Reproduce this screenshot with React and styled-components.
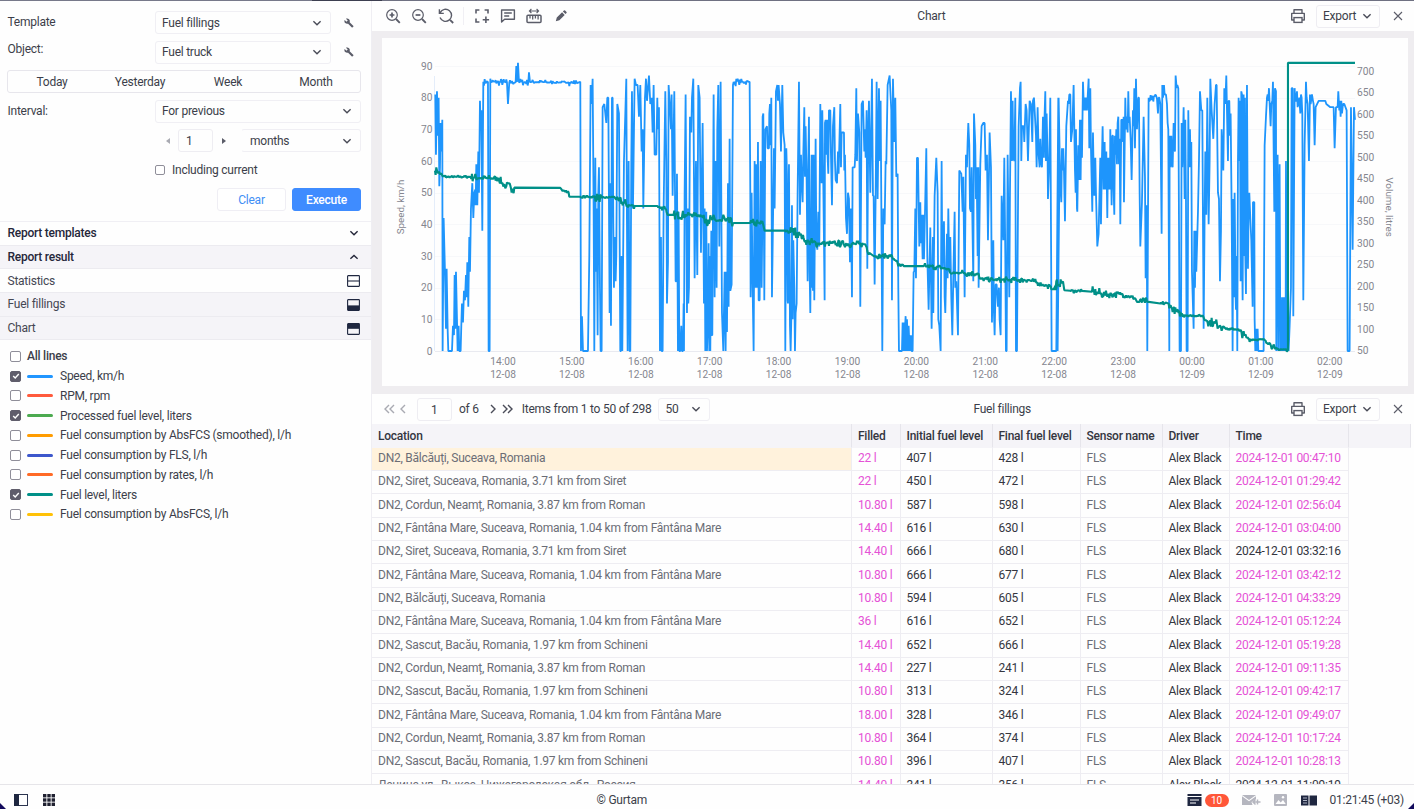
import React from "react";
import styled, { createGlobalStyle } from "styled-components";

const GlobalStyle = createGlobalStyle`
    * { box-sizing: border-box; }
    body {
        margin: 0;
        overflow: hidden;
        background: #fefefe;
        color: #3c3e4a;
        font-family: Roboto, "Noto Sans", sans-serif;
        font-size: 12px;
        letter-spacing: -0.245px;
        line-height: 14px;
    }
    svg { display: block; flex: none; }
`;

/* ---------- data ---------- */

const lines = [
    { name: "Speed, km/h", color: "#2196ff", checked: true },
    { name: "RPM, rpm", color: "#ff5a3c", checked: false },
    { name: "Processed fuel level, liters", color: "#4caa50", checked: true },
    { name: "Fuel consumption by AbsFCS (smoothed), l/h", color: "#ff9c00", checked: false },
    { name: "Fuel consumption by FLS, l/h", color: "#3c57cc", checked: false },
    { name: "Fuel consumption by rates, l/h", color: "#ff6a26", checked: false },
    { name: "Fuel level, liters", color: "#009088", checked: true },
    { name: "Fuel consumption by AbsFCS, l/h", color: "#ffc107", checked: false },
];

const SIRET = "DN2, Siret, Suceava, Romania, 3.71 km from Siret";
const CORDUN = "DN2, Cordun, Neamț, Romania, 3.87 km from Roman";
const FANTANA = "DN2, Fântâna Mare, Suceava, Romania, 1.04 km from Fântâna Mare";
const SASCUT = "DN2, Sascut, Bacău, Romania, 1.97 km from Schineni";
const BALCAUTI = "DN2, Bălcăuți, Suceava, Romania";

const rows = [
    [BALCAUTI, "22 l", "407 l", "428 l", "00:47:10"],
    [SIRET, "22 l", "450 l", "472 l", "01:29:42"],
    [CORDUN, "10.80 l", "587 l", "598 l", "02:56:04"],
    [FANTANA, "14.40 l", "616 l", "630 l", "03:04:00"],
    [SIRET, "14.40 l", "666 l", "680 l", "03:32:16", true],
    [FANTANA, "10.80 l", "666 l", "677 l", "03:42:12"],
    [BALCAUTI, "10.80 l", "594 l", "605 l", "04:33:29"],
    [FANTANA, "36 l", "616 l", "652 l", "05:12:24"],
    [SASCUT, "14.40 l", "652 l", "666 l", "05:19:28"],
    [CORDUN, "14.40 l", "227 l", "241 l", "09:11:35"],
    [SASCUT, "10.80 l", "313 l", "324 l", "09:42:17"],
    [FANTANA, "18.00 l", "328 l", "346 l", "09:49:07"],
    [CORDUN, "10.80 l", "364 l", "374 l", "10:17:24"],
    [SASCUT, "10.80 l", "396 l", "407 l", "10:28:13"],
    ["Ленина ул., Выкса, Нижегородская обл., Россия", "14.40 l", "341 l", "356 l", "11:09:19", true],
];

// "tick,value[,noise]" - three ticks per pixel, noise is spread over the way to the point
const speedTrack = [
    [0, `45,81 47,62 50,82 53,68 55,80 57,52 59,58 61,72 63,63 66,73 67,0 70,42 74,25 77,7 79,26 82,7 84,0 95,0 98,8 101,5
    103,24 105,7 107,25 110,10 112,0 115,8 117,0 121,0 123,8 125,15 128,9 131,19 134,16 137,24 139,17 141,28 144,14 147,36
    149,25 152,45 156,53 159,42 162,50 165,51 166,46 168,59 171,46 174,63 176,50 179,79 181,70 183,76 186,38 189,85
    203,85,0.7 205,0 208,0 210,86 212,85 260,84.8,0.8 263,78 267,84.8 286,84.8,0.6 288,90 290,85 293,91 296,85
    324,84.8,0.7 326,88 329,85 400,84.8,0.5 445,84.9,0.2 470,84.6,0.7 480,85 482,0 485,11 488,0 503,0 507,30 511,84 514,78
    517,86 520,45 522,0 525,61 527,25 529,45 532,5 534,50 536,58 539,20 541,0 544,0 547,77 552,78 558,72 561,80 564,80
    568,12 570,53 572,8 575,80 577,80 579,40 581,20 583,36 586,22 588,30 591,78 596,75 600,0 602,0 604,30 606,0 611,60
    618,86 620,40 622,0 625,60 628,0 630,0 633,60 635,82 638,45 643,86 647,84 652,84 656,74 660,84 664,63 667,70 669,45
    674,80 677,86 680,79 683,83 686,87 690,78 694,80 697,69 700,84 703,62 708,62 711,80 713,70 716,77 719,0 722,36 724,0
    727,0 730,45 735,82 738,60 740,15 743,28 745,84 749,77 752,70 754,81 757,49 762,82 766,22 768,22 770,56 772,20 773,0
    775,44 777,0 780,0 783,8 785,0 788,0 790,15 791,0 793,50 796,81 800,12 803,45 804,15 806,20 809,74 813,69 815,80
    819,86 823,23 827,60 831,24 834,84 838,80 842,31 847,72 851,15 853,45 855,0 858,44 860,0 863,10 865,34 867,0 869,30
    870,0 873,38 874,5 876,5 880,81 883,17 886,60 889,20 891,70 894,84 897,33 901,85 905,12 909,0 913,25 916,0 918,25
    920,6 923,53 925,14 928,67 930,19 934,21 938,84 940,85`],
    [930, `25,85,0.8 58,85,0.6 60,50 61,17 64,50 67,20 70,0 73,60 75,20 77,59 80,20 83,66 85,16 88,16 91,60 94,20 96,40 97,74
    99,75 102,16 105,70 110,71 112,64 116,64 117,75 119,78 121,65 123,80 125,17 131,64 133,45 137,82 141,84 143,79 145,84
    149,78 152,63 156,84 159,69 163,65 165,0 168,64 170,56 172,16 173,15 176,59 179,8 181,0 183,10 185,46 187,10 189,35
    192,20 194,0 196,12 199,15 202,50 206,85 209,43 212,62 214,54 217,47 219,62 222,77 224,55 226,71 229,54 232,22 234,60
    236,74 238,25 240,12 244,62 245,20 247,62 248,19 250,62 252,16 256,67 258,35 261,32 264,44 267,33 270,78 274,53 276,76
    279,53 283,16 284,72 286,73 288,62 291,73 292,61 294,56 296,76 300,76 302,62 305,46 308,71 312,77 314,60 316,54 320,53
    323,63 325,56 330,78 332,58 334,69 341,69 342,57 344,62 347,42 350,37 353,50 356,48 359,28 362,45 365,17 367,58 373,58
    375,62 378,83 380,60 383,75 387,69 390,14 394,78 398,79 402,63 404,70 406,61 409,76 411,26 414,70 416,79 420,50 425,86
    428,49 430,49 433,21 436,49 439,85 442,48 446,83 449,60 451,79 456,0 459,45 463,40 466,60 468,59 472,84 478,87 483,76
    485,16 488,86 492,66 495,80 498,55 502,56 504,20 506,0 515,0 517,9 519,0 521,9 523,0 524,7 526,11 528,0 530,10 533,0
    535,8 538,0 539,5 541,0 542,5 544,0 547,0 550,25 552,25 555,45 557,23 560,61 563,61 567,33 570,47 572,34 574,43 577,29
    579,43 581,29 584,43 588,64 591,30 595,13 600,39 604,7 608,36 609,12 613,49 618,61 622,50 624,10 627,8 631,0 634,60
    636,26 641,41 643,17 645,12 650,37 652,23 654,45 657,25 660,36 663,17 666,5 669,23 673,44 675,20 678,22 683,5 687,57
    693,56 697,44 699,55 703,17 707,62 710,58 712,66 714,72 717,65 719,45 722,44 724,58 726,43 729,22 731,75 735,65 737,48
    739,58 742,30 744,58 745,20 750,59 754,71 759,72 763,72 766,57 770,62 773,35 778,69 782,58 785,9 789,35 791,12 793,5
    796,21 799,21 803,14 806,20 808,10 811,5 814,49 819,35 822,61 825,30 827,0 829,0 832,62 837,17 839,50 842,82 845,60
    847,79 849,61 852,60 855,80 857,0 860,0 862,30 865,71 869,83 871,85 873,60 875,71 880,71 882,66 886,78 889,76 893,60
    898,79 902,78 906,66 908,79 911,80 917,68 919,58 922,77 925,62 928,58 930,67 932,60 935,58 938,74 941,61 943,75 945,82
    947,60 949,75 952,60 953,48 957,60 960,80 964,0 978,0 981,40 984,80 988,62`],
    [1890, `22,0 25,80 28,63 30,54 33,47 35,64 37,57 39,64 41,57 44,41 48,71 53,79 55,78 57,81 60,81 62,66 66,70 70,84 74,57
    76,50 77,70 80,45 81,44 84,65 86,54 89,73 91,54 93,73 95,61 98,85 101,76 103,80 105,76 108,80 110,76 115,86 117,64
    120,83 122,64 126,44 128,69 130,57 132,49 135,61 137,50 141,33 145,37 150,61 152,40 155,61 157,71 160,51 163,66 165,51
    168,63 171,42 173,61 175,51 177,61 179,51 180,70 184,46 186,68 188,68 190,51 192,43 194,68 196,62 198,70 200,59 202,72
    204,74 206,59 208,67 210,40 213,73 216,73 218,66 220,74 221,47 225,80 227,70 229,74 232,69 234,82 236,72 238,74 241,67
    244,54 248,76 250,71 252,83 254,64 257,86 260,70 264,80 266,80 268,50 270,33 275,47 280,74 284,55 286,23 289,46 291,0
    295,80 320,79.7,0.7 323,75 325,80 327,80 330,78 334,37 336,84 338,80 341,84 343,81 347,81 350,78 352,72 354,70 357,0
    358,65 359,68 361,58 363,68 365,61 367,58 370,72 372,64 374,63 376,87 379,83 381,84 384,83 388,0 392,0 394,72 396,58
    400,77 403,48 405,73 407,48 409,0 412,0 414,76 416,58 419,70 421,58 423,66 425,25 430,7 432,38 434,20 436,38 438,25
    443,44 446,60 449,82 453,76 456,76 460,7 463,43 465,63 468,43 471,80 475,40 478,60 480,86 484,76 489,67 493,78 497,84
    499,84 503,50 506,48 509,22 512,38 514,70 519,57 522,83 525,78 528,87 533,60 535,79 537,79 539,68 541,75 544,45 547,0
    549,48 551,17 553,50 556,17 557,13 559,30 561,0 563,60 565,80 567,60 569,79 571,22 573,82 575,81 576,25 577,16 580,81
    582,30 584,80 585,30 587,18 590,84 593,26 595,45 597,50 600,42 603,35 607,14 608,47 612,47 613,10 615,0 617,7 619,0
    622,7 624,0 640,0 643,65 647,74 650,80 652,81 654,79 656,83 661,71 663,78 666,79 668,85 672,44 674,83 677,82 678,0
    680,55 682,62 684,0 686,40 688,59 690,0 692,16 694,0 695,17 696,0 698,17 699,0 701,17 702,0 704,17 706,0 707,60 710,0
    712,17 715,0 718,8 722,20 724,83 727,83 729,11 733,83 735,79 737,79 740,82 742,77 747,80 750,75 752,81 754,80 756,75
    759,16 763,65 767,85 769,80 772,78 776,60 779,81 781,78 785,81 788,79 790,78 793,65 796,77 805,79 825,79 828,78 840,77
    850,77 853,64 857,77 862,77 864,82 867,76 869,79 871,74 873,79 875,75 878,78 882,78 889,76 892,0 898,0 902,77 907,32
    911,77 914,73`],
];

const fuelTrack = [
    [0, `44,57 50,57,0.8 67,55.2,0.8 80,55,0.6 110,55,0.2 145,55,0.3 180,54.6,0.9 235,54.5,0.7 245,53,0.8 258,52,0.9
    282,51.6,1 420,51.5 425,50.8,0.5 445,50,0.4 447,48.7 480,48.7 520,48.7,0.3 545,48.3,0.9 580,48.7,0.2 595,47.5,0.4
    625,46,1 645,45.8,0.6 710,45.8 735,44.8,0.6 742,43,0.5 760,43 800,43,0.9 840,43,0.5 852,41.7,0.6 905,41,1.1 909,43
    916,41 940,40.4,0.9`],
    [930, `60,40.4 98,40.2,0.9 103,38 165,38 205,37.5,1.1 210,36.5,0.7 230,34.5,0.7 270,34,0.9 405,33.7,0.7 417,31,0.8 430,30
    485,30,0.5 488,29 500,28.5,0.4 504,26.8 520,26.8,0.6 580,26.8 620,26.5,0.6 655,25.8,0.6 662,24.5,0.9 690,24.8,0.3
    745,24.4,0.8 748,22.7 795,22.5,0.5 895,22.4,0.6 925,21.4,0.6 962,20.2,0.5 963,19.5 978,19.5 980,21.5`],
    [1890, `10,19.5 16,19.5 18,22 25,21,0.6 38,22,0.7 42,19.2 60,19 95,19,0.4 125,18.7 165,17.8,1 215,18,0.7 255,16.6,0.6
    260,15.5 290,15.6,0.8 330,15 355,15,0.6 365,13.5,0.7 385,12,0.7 410,11.2,0.7 458,11.1,0.2 462,10 500,8.5,1 520,7.7,1
    528,6.9 560,6.9,0.3 590,4.2,0.8 600,3.6,0.5 642,3.6,0.2 660,2.2,0.4 675,0.6,0.6 713,0.4,0.3 713,91 914,91`],
];

const TICKS_PER_PX = 3;
const PX_PER_KMH = 285 / 90;

function toPoints(track) {
    const out = [];
    let prev = null;
    let seed = 7;
    const push = (t, v) => out.push(`${(t / TICKS_PER_PX).toFixed(2)},${(285 - v * PX_PER_KMH).toFixed(2)}`);
    track.forEach(([start, text]) => {
        text.trim().split(/\s+/).forEach((item) => {
            const [tick, v, noise] = item.split(",").map(Number);
            const t = tick + start;
            if (noise && prev) {
                for (let x = prev.t + 2; x < t - 1; x += 2) {
                    seed = (seed * 16807) % 2147483647;
                    const r = seed / 2147483647 - 0.5;
                    const base = prev.v + ((v - prev.v) * (x - prev.t)) / (t - prev.t);
                    push(x, base + r * Math.abs(r) * 7 * noise);
                }
            }
            push(t, v);
            prev = { t, v };
        });
    });
    return out.join(" ");
}

/* ---------- icons ---------- */

const Stroke = ({ size = 18, w = 1.3, color = "#5b5d69", children }) => (
    <svg width={size} height={size} viewBox={`0 0 ${size} ${size}`} fill="none" stroke={color} strokeWidth={w}>
        {children}
    </svg>
);

const ZoomIcon = ({ plus }) => (
    <Stroke w={1.2}>
        <circle cx="8" cy="8" r="5.3" />
        <path d={plus ? "M5.6 8h4.8M8 5.6v4.8" : "M5.6 8h4.8"} strokeWidth="1.7" />
        <path d="M12 12l3.8 3.8" strokeWidth="1.8" />
    </Stroke>
);

const ResetIcon = () => (
    <Stroke>
        <path d="M3.2 5.6A6 6 0 1 1 3 10.6M2.4 2.2v4.2h4.4" strokeWidth="1.4" />
        <path d="M13 12.8l3.2 3.2" strokeWidth="1.8" />
    </Stroke>
);

const SelectIcon = () => (
    <Stroke w={1.6}>
        <path d="M3 6.4V3h3.4M11.6 3H15v3.4M3 11.6V15h3.4M12.9 9.6v6.4M9.7 12.8h6.4" />
    </Stroke>
);

const CommentIcon = () => (
    <Stroke w={1.4}>
        <path d="M2.6 3h12.8v9.2H5.6L2.6 15z" strokeLinejoin="round" />
        <path d="M5.2 6h7.6M5.2 9h5" />
    </Stroke>
);

const RulerIcon = () => (
    <Stroke w={1.3}>
        <rect x="2" y="8.2" width="14" height="7.4" rx="1" strokeWidth="1.5" />
        <path d="M5 8.5v3M7.7 8.5v4M10.4 8.5v3M13.1 8.5v4" />
        <path d="M4.4 4h9.2M6.4 2L4.4 4l2 2M11.6 2l2 2-2 2" strokeWidth="1.1" />
    </Stroke>
);

const PencilIcon = () => (
    <svg width="18" height="18" viewBox="0 0 18 18" fill="#5b5d69">
        <path d="M3.8 14.2l1-3.6 5.3-5.3 2.6 2.6-5.3 5.3zM10.9 4.5l1-1q.6-.5 1.2 0l1.4 1.4q.5.6 0 1.2l-1 1z" />
    </svg>
);

const PrintIcon = () => (
    <Stroke w={1.4}>
        <path d="M5 6.2V2.7h8v3.5M5 13H2.7V6.4h12.6V13H13" strokeLinejoin="round" />
        <rect x="5" y="10.6" width="8" height="4.8" />
    </Stroke>
);

const CloseIcon = () => (
    <Stroke size={10} w={1.1}>
        <path d="M1 1l8 8M9 1L1 9" />
    </Stroke>
);

const Chevron = ({ up, color = "#4a4c58", w = 1.4 }) => (
    <Stroke size={10} w={w} color={color}>
        <path d={up ? "M1.4 6.8L5 3.4l3.6 3.4" : "M1.4 3.2L5 6.8l3.6-3.6"} />
    </Stroke>
);

const PagerIcon = ({ d, width, color = "#4a4c58" }) => (
    <svg width={width} height="10" viewBox={`0 0 ${width} 10`} fill="none" stroke={color} strokeWidth="1.4">
        <path d={d} />
    </svg>
);

const WrenchIcon = () => (
    <svg width="10" height="10" viewBox="0 0 24 24" fill="#5b5d69">
        <path d="M22.7 19l-9.1-9.1c.9-2.3.4-5-1.5-6.9-2-2-5-2.4-7.4-1.3L9 6 6 9 1.6 4.7C.4 7.1.9 10.1 2.9 12.1c1.9 1.9 4.6 2.4 6.9 1.5l9.1 9.1c.4.4 1 .4 1.4 0l2.3-2.3c.5-.4.5-1.1.1-1.4z" />
    </svg>
);

const LayoutIcon = ({ kind }) => (
    <svg width="13" height="12" viewBox="0 0 13 12" fill="none" stroke="#1f2740" strokeWidth="1.1">
        <rect x="0.6" y="0.6" width="11.8" height="10.8" rx="0.6" />
        {kind === "split" && <path d="M1 6h11" />}
        {kind === "bottom" && <rect x="1" y="6.4" width="11" height="4.8" fill="#1f2740" stroke="none" />}
        {kind === "top" && <rect x="1" y="1" width="11" height="4.8" fill="#1f2740" stroke="none" />}
    </svg>
);

/* ---------- left panel ---------- */

const Page = styled.div`
    position: relative;
    display: grid;
    grid-template: 1px 783px 25px / 372px 1fr;
    width: 1414px;
    height: 809px;
    overflow: hidden;
`;

const TopStrip = styled.div`
    grid-column: 1 / 3;
    background: linear-gradient(90deg, #77798a 0 312px, #3d3f50 312px 382px, #6f7182 382px);
`;

const SidePanel = styled.aside`
    border-right: 1px solid #efeef3;
`;

const Form = styled.div`
    height: 221px;
    padding: 10px 10px 0 7px;
    border-bottom: 1px solid #f0eff4;
`;

const FormRow = styled.div`
    display: grid;
    grid-template-columns: 148px 1fr;
    height: ${(p) => p.$h || 29.5}px;
`;

const Label = styled.span`
    padding: ${(p) => p.$top || 4.4}px 0 0 0.5px;
`;

const Controls = styled.div`
    display: flex;
    align-items: center;
    height: 23px;
`;

const Select = styled.div`
    display: flex;
    align-items: center;
    justify-content: space-between;
    width: ${(p) => p.$w}px;
    height: 23px;
    padding: 0 8.5px 0 ${(p) => p.$left || 6}px;
    border: 1px solid #f0eff4;
    border-left-color: ${(p) => (p.$open ? "transparent" : "#f0eff4")};
    border-radius: 3px;
    margin-right: ${(p) => p.$gap || 0}px;
`;

const Segments = styled.div`
    display: grid;
    grid-template-columns: repeat(4, 1fr);
    width: 354px;
    height: 23px;
    border: 1px solid #e7e6ec;
    border-radius: 3px;
    text-align: center;
    line-height: 22px;
    margin-bottom: 6.5px;
`;

const Arrow = styled.i`
    border: 3px solid transparent;
    border-width: 3.5px 4px;
    border-left-color: ${(p) => (p.$back ? "transparent" : "#5b5d69")};
    border-right-color: ${(p) => (p.$back ? "#a9aab2" : "transparent")};
    margin-left: ${(p) => (p.$back ? 7 : 9)}px;
    margin-right: ${(p) => (p.$back ? 8 : 11)}px;
`;

const NumberInput = styled.div`
    width: 35px;
    height: 23px;
    padding-left: ${(p) => p.$left || 7}px;
    line-height: 22px;
    border: 1px solid #eeedf2;
    border-radius: 3px;
`;

const Check = styled.span`
    display: flex;
    align-items: center;
    justify-content: center;
    width: ${(p) => p.$size || 10}px;
    height: ${(p) => p.$size || 10}px;
    border: 1px solid ${(p) => (p.$on ? "#5f5d6b" : "#8f8e99")};
    border-radius: 2px;
    background: ${(p) => (p.$on ? "#5f5d6b" : "#fff")};
    flex: none;
`;

const CheckLabel = styled.span`
    margin-left: ${(p) => p.$gap || 7}px;
`;

const Buttons = styled.div`
    display: flex;
    justify-content: flex-end;
    gap: 6px;
`;

const Button = styled.div`
    width: 69px;
    height: 23px;
    line-height: 22px;
    text-align: center;
    border: 1px solid ${(p) => (p.$primary ? "#3f8cff" : "#efeef4")};
    border-radius: 3px;
    background: ${(p) => (p.$primary ? "#3f8cff" : "#fff")};
    color: ${(p) => (p.$primary ? "#fff" : "#3f8ff5")};
    font-weight: ${(p) => (p.$primary ? 500 : 400)};
`;

const PanelRow = styled.div`
    display: flex;
    align-items: center;
    justify-content: space-between;
    height: 23.7px;
    padding: 0 ${(p) => (p.$bold ? 12.5 : 11)}px 0 7.5px;
    background: ${(p) => (p.$active ? "#f5f4f8" : "#fefefe")};
    border-bottom: 1px solid #ecebf0;
    font-weight: ${(p) => (p.$bold ? 500 : 400)};
    color: ${(p) => (p.$bold ? "#25273a" : "#454753")};

    > svg { margin-top: ${(p) => (p.$bold ? 0 : 1)}px; }
`;

const LineList = styled.div`
    padding: 6px 0 0 10px;
`;

const LineRow = styled.div`
    display: flex;
    align-items: center;
    height: 19.75px;
    font-weight: ${(p) => (p.$bold ? 500 : 400)};
`;

const LineColor = styled.span`
    width: 26px;
    height: 3px;
    border-radius: 2px;
    margin: 0 0 0 6px;
    background: ${(p) => p.$color};
`;

/* ---------- right side ---------- */

const Main = styled.main`
    display: flex;
    flex-direction: column;
    min-width: 0;
    overflow: hidden;
`;

const Toolbar = styled.div`
    display: flex;
    align-items: center;
    height: 30px;
    padding: 0 11px 0 ${(p) => p.$left || 12}px;
    flex: none;
`;

const Tools = styled.div`
    display: flex;
    align-items: center;
    gap: 8.4px;
`;

const ToolDivider = styled.span`
    width: 1px;
    height: 18px;
    background: #f0eff4;
`;

const Title = styled.div`
    flex: 1;
    text-align: center;
    padding-left: ${(p) => p.$shift || 0}px;
`;

const ExportButton = styled.div`
    display: flex;
    align-items: center;
    justify-content: space-between;
    width: 64px;
    height: 23px;
    padding: 0 7px 0 6px;
    margin: 0 13px 0 9px;
    border: 1px solid #eeedf2;
    border-radius: 3px;
`;

const ChartArea = styled.div`
    height: 363px;
    padding: 7px 6px 8px 10px;
    background: #efedf0;
    flex: none;
`;

const ChartCard = styled.div`
    height: 348px;
    background: #fefefe;
`;

const AxisText = styled.text`
    font-size: ${(p) => p.$size || 10.2}px;
    letter-spacing: 0;
    fill: #85868f;
    text-anchor: ${(p) => p.$anchor || "middle"};
`;

const Pager = styled.div`
    display: flex;
    align-items: center;
`;

const PagerText = styled.span`
    margin: 0 ${(p) => p.$right}px 0 ${(p) => p.$left}px;
`;

const Table = styled.div`
    width: 1039px;
`;

const TableRow = styled.div`
    display: grid;
    grid-template-columns: 480px 48.5px 92px 88px 82px 67px 119px 1fr;
    height: ${(p) => (p.$head ? 23.5 : 23.35)}px;
    background: ${(p) => (p.$head ? "#f5f4f8" : "transparent")};
    font-weight: ${(p) => (p.$head ? 500 : 400)};
`;

const tones = { text: "#34363f", muted: "#6b6d76", pink: "#e552d6" };

const Cell = styled.div`
    padding: ${(p) => (p.$head ? 5 : 3.5)}px 0 0 6px;
    white-space: nowrap;
    color: ${(p) => tones[p.$tone || "text"]};
    background: ${(p) => (p.$marked ? "#fff2dc" : "transparent")};
    border-right: 1px solid ${(p) => (p.$head ? "#e6e5eb" : "#eeedf2")};
    border-bottom: 1px solid ${(p) => (p.$head ? "transparent" : "#eeedf2")};
`;

/* ---------- footer ---------- */

const Footer = styled.footer`
    grid-column: 1 / 3;
    display: flex;
    align-items: center;
    padding: 6px 10px 0 14px;
    border-top: 1px solid #e6e5e9;
    background: #fefefe;
`;

const FooterGroup = styled.div`
    display: flex;
    align-items: center;
`;

const Badge = styled.span`
    width: 24px;
    height: 13px;
    margin: 0 13px 0 3px;
    border-radius: 7px;
    background: #ff5638;
    color: #fff;
    font-size: 10px;
    letter-spacing: 0;
    line-height: 13px;
    text-align: center;
`;

const FooterIcon = styled.span`
    margin-right: ${(p) => p.$gap}px;
`;

const Corner = styled.span`
    position: absolute;
    bottom: 0;
    ${(p) => (p.$right ? "right: 0;" : "left: 0;")}
    width: 6px;
    height: 6px;
    background: #120a5c;
    clip-path: ${(p) => (p.$right ? "polygon(100% 0, 100% 100%, 0 100%)" : "polygon(0 0, 100% 100%, 0 100%)")};
`;

function ReportForm() {
    return (
        <Form>
            <FormRow>
                <Label>Template</Label>
                <Controls><Select $w={176} $gap={13}>Fuel fillings<Chevron /></Select><WrenchIcon /></Controls>
            </FormRow>
            <FormRow>
                <Label $top={1}>Object:</Label>
                <Controls><Select $w={176} $gap={13}>Fuel truck<Chevron /></Select><WrenchIcon /></Controls>
            </FormRow>
            <Segments>
                <span>Today</span><span>Yesterday</span><span>Week</span><span>Month</span>
            </Segments>
            <FormRow>
                <Label>Interval:</Label>
                <Controls><Select $w={206}>For previous<Chevron /></Select></Controls>
            </FormRow>
            <FormRow>
                <span />
                <Controls>
                    <Arrow $back />
                    <NumberInput>1</NumberInput>
                    <Arrow />
                    <Select $w={120} $left={8} $open>months<Chevron /></Select>
                </Controls>
            </FormRow>
            <FormRow $h={29.5}>
                <span />
                <Controls><Check /><CheckLabel>Including current</CheckLabel></Controls>
            </FormRow>
            <Buttons>
                <Button>Clear</Button>
                <Button $primary>Execute</Button>
            </Buttons>
        </Form>
    );
}

function LinePicker() {
    return (
        <LineList>
            <LineRow $bold><Check $size={11} /><CheckLabel $gap={6}>All lines</CheckLabel></LineRow>
            {lines.map((line) => (
                <LineRow key={line.name}>
                    <Check $size={11} $on={line.checked}>
                        {line.checked && (
                            <svg width="8" height="8" viewBox="0 0 8 8" fill="none" stroke="#fff" strokeWidth="1.4">
                                <path d="M1.2 4l2 2 3.6-4" />
                            </svg>
                        )}
                    </Check>
                    <LineColor $color={line.color} />
                    <CheckLabel>{line.name}</CheckLabel>
                </LineRow>
            ))}
        </LineList>
    );
}

const hours = ["14:00", "15:00", "16:00", "17:00", "18:00", "19:00", "20:00", "21:00", "22:00", "23:00", "00:00", "01:00", "02:00"];

function SpeedChart() {
    return (
        <ChartCard>
            <svg width="1026" height="348" viewBox="382 38 1026 348">
                {[0, 10, 20, 30, 40, 50, 60, 70, 80, 90].map((v) => {
                    const y = 351 - v * PX_PER_KMH;
                    return (
                        <g key={v}>
                            <path d={`M435 ${Math.round(y) + 0.5}H1355`} stroke={v ? "#f7f8fa" : "#e9eaf0"} />
                            <AxisText x="432.5" y={y + 3.5} $anchor="end">{v}</AxisText>
                        </g>
                    );
                })}
                <path d="M434.5 76V351" stroke="#e4edfa" />
                {Array.from({ length: 14 }, (_, i) => 50 + i * 50).map((v, i) => (
                    <AxisText key={v} x="1357" y={354 - i * 21.5} $anchor="start">{v}</AxisText>
                ))}
                {hours.map((h, i) => (
                    <g key={h}>
                        <AxisText x={503 + i * 68.9} y="365">{h}</AxisText>
                        <AxisText x={503 + i * 68.9} y="378">{i < 10 ? "12-08" : "12-09"}</AxisText>
                    </g>
                ))}
                <AxisText $size={9.8} transform="translate(404 207) rotate(-90)">Speed, km/h</AxisText>
                <AxisText $size={9.9} transform="translate(1386 207) rotate(90)">Volume, litres</AxisText>
                <g transform="translate(420.3 66)" fill="none" strokeLinejoin="bevel">
                    <polyline points={toPoints(speedTrack)} stroke="#1e95fc" strokeWidth="1.8" />
                    <polyline points={toPoints(fuelTrack)} stroke="#009088" strokeWidth="2.1" />
                </g>
            </svg>
        </ChartCard>
    );
}

function Actions() {
    return (
        <>
            <PrintIcon />
            <ExportButton>Export<Chevron /></ExportButton>
            <CloseIcon />
        </>
    );
}

function FillingsTable() {
    const head = ["Location", "Filled", "Initial fuel level", "Final fuel level", "Sensor name", "Driver", "Time", ""];
    return (
        <Table>
            <TableRow $head>
                {head.map((h) => <Cell key={h} $head>{h}</Cell>)}
            </TableRow>
            {rows.map(([place, filled, initial, final, time, plain], i) => (
                <TableRow key={time}>
                    <Cell $tone="muted" $marked={i === 0}>{place}</Cell>
                    <Cell $tone="pink">{filled}</Cell>
                    <Cell>{initial}</Cell>
                    <Cell>{final}</Cell>
                    <Cell $tone="muted">FLS</Cell>
                    <Cell>Alex Black</Cell>
                    <Cell $tone={plain ? "text" : "pink"}>2024-12-01 {time}</Cell>
                </TableRow>
            ))}
        </Table>
    );
}

function StatusBar() {
    return (
        <Footer>
            <FooterGroup>
                <FooterIcon $gap={15}>
                    <svg width="14" height="12" viewBox="0 0 14 12">
                        <rect x="0.5" y="0.5" width="13" height="11" fill="#fff" stroke="#2c3550" />
                        <rect width="5" height="12" fill="#1f2740" />
                    </svg>
                </FooterIcon>
                <svg width="12" height="12" viewBox="0 0 12 12" fill="#1f2030">
                    {[0, 1, 2].map((r) => [0, 1, 2].map((c) => (
                        <rect key={`${r}${c}`} x={c * 4.3} y={r * 4.3} width="3.4" height="3.4" />
                    )))}
                </svg>
            </FooterGroup>
            <Title $shift={2}>© Gurtam</Title>
            <FooterGroup>
                <svg width="15" height="12" viewBox="0 0 15 12">
                    <path d="M0.5 0h14v2h-14zM0.5 3h14v9h-14z" fill="#1f2740" />
                    <path d="M3 6h9M3 9h6" stroke="#fff" strokeWidth="1.1" />
                </svg>
                <Badge>10</Badge>
                <FooterIcon $gap={13}>
                    <svg width="19" height="12" viewBox="0 0 19 12" fill="#b5b6bf">
                        <path d="M0 1h14l-7 5zM0 2.3l7 5 7-5V5l-4.5 3 1 3H0z" />
                        <path d="M11 8h7.5M13.5 5.5L11 8l2.5 2.5M15.5 5.5v5" stroke="#b5b6bf" strokeWidth="1.5" fill="none" />
                    </svg>
                </FooterIcon>
                <FooterIcon $gap={14}>
                    <svg width="13" height="12" viewBox="0 0 13 12">
                        <rect width="13" height="12" rx="1" fill="#b5b6bf" />
                        <path d="M1.5 10l3-4 2.2 2.5L9 6l2.7 4z" fill="#fff" />
                        <circle cx="9" cy="3.3" r="1.2" fill="#fff" />
                    </svg>
                </FooterIcon>
                <FooterIcon $gap={13}>
                    <svg width="16" height="11" viewBox="0 0 16 11">
                        <path d="M0 0.5h7.5v10H0zM8.5 0.5H16v10H8.5z" fill="#1f2740" />
                        <path d="M2 3h4M2 5.5h4M2 8h4" stroke="#aeb3c4" />
                    </svg>
                </FooterIcon>
                <span>01:21:45 (+03)</span>
            </FooterGroup>
        </Footer>
    );
}

function App() {
    return (
        <Page>
            <GlobalStyle />
            <TopStrip />
            <SidePanel>
                <ReportForm />
                <PanelRow $bold>Report templates<Chevron color="#25273a" /></PanelRow>
                <PanelRow $bold $active>Report result<Chevron up color="#25273a" /></PanelRow>
                <PanelRow>Statistics<LayoutIcon kind="split" /></PanelRow>
                <PanelRow $active>Fuel fillings<LayoutIcon kind="bottom" /></PanelRow>
                <PanelRow $active>Chart<LayoutIcon kind="top" /></PanelRow>
                <LinePicker />
            </SidePanel>
            <Main>
                <Toolbar>
                    <Tools>
                        <ZoomIcon plus />
                        <ZoomIcon />
                        <ResetIcon />
                        <ToolDivider />
                        <SelectIcon />
                        <CommentIcon />
                        <RulerIcon />
                        <PencilIcon />
                    </Tools>
                    <Title $shift={4}>Chart</Title>
                    <Actions />
                </Toolbar>
                <ChartArea>
                    <SpeedChart />
                </ChartArea>
                <Toolbar>
                    <Pager>
                        <PagerIcon width={11} color="#a9aab2" d="M5 1L1 5l4 4M10 1L6 5l4 4" />
                        <PagerText $left={5} $right={11}><PagerIcon width={6} color="#a9aab2" d="M5 1L1 5l4 4" /></PagerText>
                        <NumberInput $left={13}>1</NumberInput>
                        <PagerText $left={7} $right={11}>of 6</PagerText>
                        <PagerIcon width={6} d="M1 1l4 4-4 4" />
                        <PagerText $left={6} $right={9}><PagerIcon width={11} d="M1 1l4 4-4 4M6 1l4 4-4 4" /></PagerText>
                        <PagerText $left={0} $right={7}>Items from 1 to 50 of 298</PagerText>
                        <Select $w={52}>50<Chevron /></Select>
                    </Pager>
                    <Title $shift={5}>Fuel fillings</Title>
                    <Actions />
                </Toolbar>
                <FillingsTable />
            </Main>
            <StatusBar />
            <Corner />
            <Corner $right />
        </Page>
    );
}

export default App;
